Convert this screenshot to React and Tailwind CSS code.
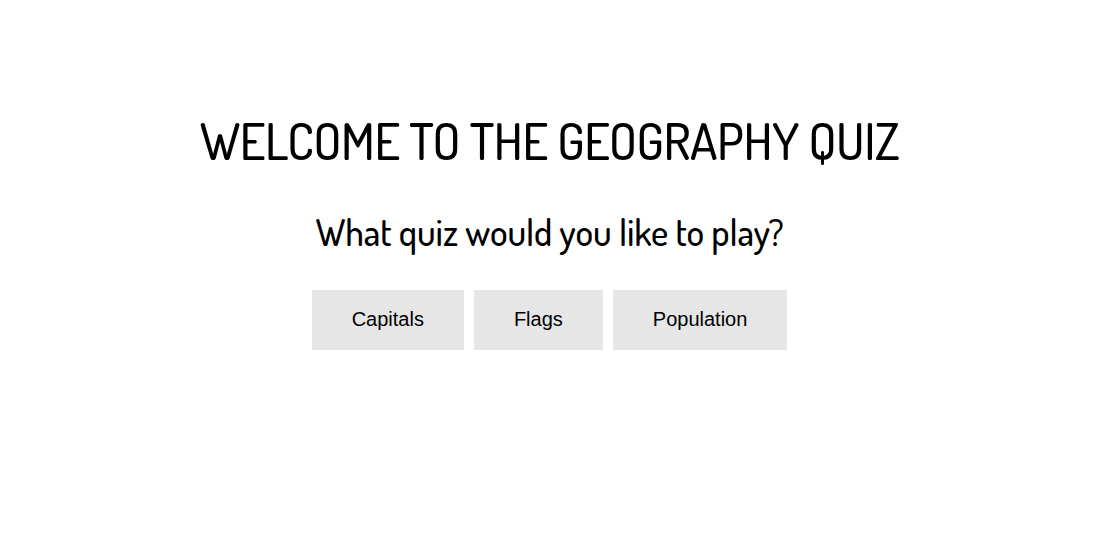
import React from 'react';

const quizzes = ['Capitals', 'Flags', 'Population'];

const App = () => {
    return (
        <div className="min-h-[557px] bg-white pr-[17px] text-black">
            <div className="flex flex-col items-center pt-[111px]">
                <h1 className="text-[50px] leading-[60px] font-medium tracking-[-0.4px] font-['Dosis','Liberation_Sans_Narrow','DejaVu_Sans_Condensed',sans-serif]">
                    WELCOME TO THE GEOGRAPHY QUIZ
                </h1>
                <h2 className="mt-[39px] text-[37px] leading-[44px] font-medium tracking-[-0.1px] font-['Dosis','Liberation_Sans_Narrow','DejaVu_Sans_Condensed',sans-serif]">
                    What quiz would you like to play?
                </h2>
                <div className="mt-[36px] flex gap-[10px]">
                    {quizzes.map((q) => (
                        <button key={q} className="h-[60px] px-10 pb-[2px] bg-[#e6e6e6] text-[20px] font-['Liberation_Sans',Arial,sans-serif]">
                            {q}
                        </button>
                    ))}
                </div>
            </div>
        </div>
    );
};

export default App;
